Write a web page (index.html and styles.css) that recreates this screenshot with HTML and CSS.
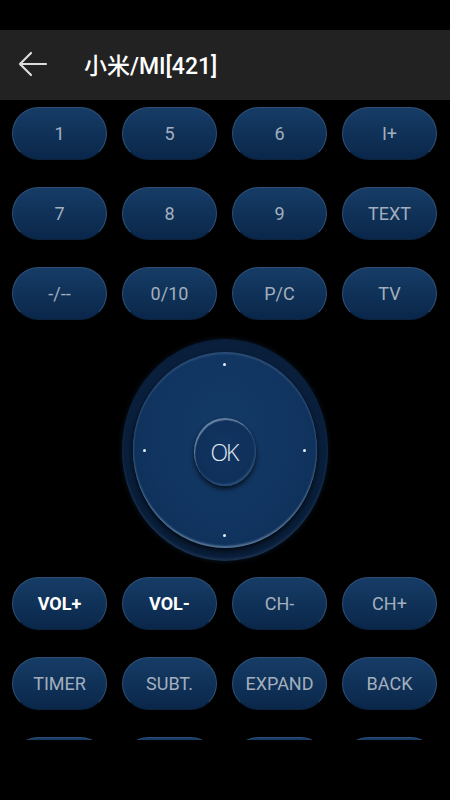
FILE: index.html
```html
<!DOCTYPE html>
<html lang="zh">
<head>
    <meta charset="UTF-8">
    <meta name="viewport" content="width=device-width, initial-scale=1.0">
    <title>小米/MI[421]</title>
    <link rel="stylesheet" href="styles.css">
</head>
<body>
    <div class="status"></div>
    <div class="header">
        <svg class="back" width="30" height="26" viewBox="0 0 30 26">
            <path d="M28 13H3M13 2L2 13l11 11" fill="none" stroke="#dcdcdc" stroke-width="2.2" stroke-linecap="round" stroke-linejoin="round"/>
        </svg>
        <span class="title">小米/MI[421]</span>
    </div>

    <div class="content">
        <div class="keys">
            <button class="key">1</button>
            <button class="key">5</button>
            <button class="key">6</button>
            <button class="key">I+</button>
            <button class="key">7</button>
            <button class="key">8</button>
            <button class="key">9</button>
            <button class="key">TEXT</button>
            <button class="key">-/--</button>
            <button class="key">0/10</button>
            <button class="key">P/C</button>
            <button class="key">TV</button>
        </div>

        <div class="dpad-area">
            <div class="dpad-ring">
                <div class="dpad">
                    <span class="dot dot-up"></span>
                    <span class="dot dot-left"></span>
                    <span class="dot dot-right"></span>
                    <span class="dot dot-down"></span>
                    <button class="ok">OK</button>
                </div>
            </div>
        </div>

        <div class="keys">
            <button class="key strong">VOL+</button>
            <button class="key strong">VOL-</button>
            <button class="key">CH-</button>
            <button class="key">CH+</button>
            <button class="key">TIMER</button>
            <button class="key">SUBT.</button>
            <button class="key">EXPAND</button>
            <button class="key">BACK</button>
            <button class="key"></button>
            <button class="key"></button>
            <button class="key"></button>
            <button class="key"></button>
        </div>
    </div>
</body>
</html>
```

FILE: styles.css
```css
body {
    margin: 0;
    background: #000;
    font-family: Roboto, "Noto Sans CJK SC", sans-serif;
}
.status {
    height: 30px;
    background: #000;
}
.header {
    height: 70px;
    background: #222;
    display: flex;
    align-items: center;
}
.back {
    margin-left: 18px;
    margin-top: -2px;
}
.title {
    margin-left: 36px;
    color: #fff;
    font-size: 23px;
    font-weight: 500;
    margin-top: -2px;
}
.content {
    height: 640px;
    overflow: hidden;
}
.keys {
    display: grid;
    grid-template-columns: repeat(4, 95px);
    grid-auto-rows: 53px;
    column-gap: 15px;
    row-gap: 27px;
    padding: 7px 0 0 12px;
}
.key {
    border: 1px solid #2f5076;
    border-bottom-color: #0c223d;
    border-radius: 27px;
    background: linear-gradient(#163c66, #0a274a);
    box-shadow: 0 1px 2px rgba(0, 0, 0, 0.8);
    color: #a3afbe;
    font-family: Roboto, sans-serif;
    font-size: 18px;
    padding: 0;
}
.key.strong {
    color: #fff;
    font-weight: bold;
}
.dpad-area {
    height: 240px;
    padding-top: 10px;
    display: flex;
    align-items: center;
    justify-content: center;
}
.dpad-ring {
    width: 206px;
    height: 222px;
    border-radius: 50%;
    background: radial-gradient(ellipse at center, #0a2140 60%, #081b33 82%, #051222 100%);
    box-shadow: 0 0 5px rgba(20, 50, 85, 0.5), inset 0 -2px 3px rgba(90, 120, 150, 0.25);
    display: flex;
    align-items: center;
    justify-content: center;
}
.dpad {
    position: relative;
    width: 184px;
    height: 196px;
    border-radius: 50%;
    background: radial-gradient(ellipse at 50% 40%, #133a66 0%, #10345f 60%, #0d2d54 100%);
    box-shadow: inset 0 -2px 2px rgba(160, 185, 210, 0.5), inset 0 2px 2px rgba(110, 140, 175, 0.3), 0 3px 6px rgba(0, 0, 0, 0.8);
    display: flex;
    align-items: center;
    justify-content: center;
}
.dot {
    position: absolute;
    width: 3px;
    height: 3px;
    border-radius: 50%;
    background: #e8eef5;
}
.dot-up { top: 11px; left: 90px; }
.dot-down { bottom: 11px; left: 90px; }
.dot-left { left: 10px; top: 97px; }
.dot-right { right: 11px; top: 97px; }
.ok {
    width: 62px;
    height: 68px;
    margin-top: 4px;
    border-radius: 50%;
    border: none;
    background: radial-gradient(ellipse at 50% 45%, #113562 0%, #0d2d55 100%);
    box-shadow: inset 1px 2px 1px rgba(160, 185, 212, 0.6), inset -1px -2px 2px rgba(80, 120, 160, 0.45), 0 3px 5px rgba(0, 0, 0, 0.7);
    color: #e6ecf3;
    font-family: "Open Sans", sans-serif;
    font-size: 23px;
    font-weight: 300;
    letter-spacing: -2px;
    padding: 0 2px 0 0;
}
```
